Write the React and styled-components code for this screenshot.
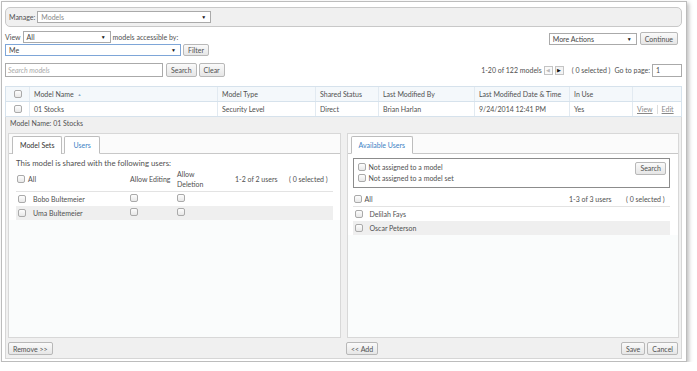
import React from 'react';
import styled, { createGlobalStyle } from 'styled-components';

const Global = createGlobalStyle`
  html, body { margin: 0; padding: 0; background: #fff; }
  body { font-family: Lato, "Open Sans", sans-serif; font-size: 7px; color: #505050; }
  * { box-sizing: border-box; }
`;

const Frame = styled.div`
  margin: 1px 0 0 1px;
  width: 686px;
  height: 361px;
  border: 1px solid #bcbcbc;
  box-shadow: 2px 2px 4px rgba(0,0,0,0.25);
  padding: 5px 4px 0 3px;
  display: flex;
  flex-direction: column;
`;

const ManageBar = styled.div`
  height: 20px;
  border: 1px solid #c8c8c8;
  border-radius: 5px;
  background: #f0f0f0;
  display: flex;
  align-items: center;
  padding-left: 3px;
  gap: 2px;
`;

const Label = styled.span`
  color: ${p => p.$muted ? '#777' : '#505050'};
  white-space: nowrap;
`;

const SelectBox = styled.div`
  width: ${p => p.$w}px;
  height: ${p => p.$h || 12}px;
  border: 1px solid ${p => p.$focus ? '#7ea6d8' : '#aaa'};
  background: #fff;
  display: flex;
  align-items: center;
  justify-content: space-between;
  padding: 0 4px 0 3px;
  color: ${p => p.$muted ? '#888' : '#444'};
  flex: none;
  &::after {
    content: '▼';
    font-size: 5px;
    color: #111;
  }
`;

const Button = styled.div`
  height: ${p => p.$h || 13}px;
  padding: 0 ${p => p.$px ?? 4}px;
  border: 1px solid #b8b8b8;
  border-radius: 2px;
  background: linear-gradient(#fafafa, #e6e6e6);
  display: inline-flex;
  align-items: center;
  color: #505050;
  white-space: nowrap;
  flex: none;
`;

const Controls = styled.div`
  margin-top: 4px;
  display: flex;
  justify-content: space-between;
  align-items: flex-start;
`;

const ControlCol = styled.div`
  display: flex;
  flex-direction: column;
  gap: 1px;
`;

const Row = styled.div`
  display: flex;
  align-items: center;
  gap: ${p => p.$gap ?? 2}px;
`;

const RightActions = styled(Row)`
  margin-right: 4px;
  margin-top: 1px;
`;

const SearchRow = styled.div`
  margin-top: 7px;
  display: flex;
  justify-content: space-between;
  align-items: center;
  height: 14px;
`;

const SearchInput = styled.div`
  width: 158px;
  height: 14px;
  border: 1px solid #aaa;
  background: #fff;
  padding-left: 2px;
  display: flex;
  align-items: center;
  color: #aaa;
  font-style: italic;
  margin-right: 1px;
`;

const PagerBtn = styled.div`
  width: 9px;
  height: 9px;
  border: 1px solid #c4c4c4;
  background: ${p => p.$on ? '#f4f4f4' : '#fafafa'};
  display: flex;
  align-items: center;
  justify-content: center;
  font-size: 5px;
  color: ${p => p.$on ? '#111' : '#bbb'};
`;

const PageInput = styled.div`
  width: 30px;
  height: 13px;
  border: 1px solid #aaa;
  background: #fff;
  padding-left: 3px;
  display: flex;
  align-items: center;
`;

const Table = styled.div`
  margin-top: 9px;
  border: 1px solid #d6e2ec;
  border-bottom: none;
`;

const TRow = styled.div`
  display: grid;
  grid-template-columns: 23px 188px 98px 63px 96px 95px 63px 1fr;
  height: 15px;
  background: ${p => p.$head ? '#f4f8fb' : '#fff'};
  border-bottom: 1px solid #d6e2ec;
`;

const Cell = styled.div`
  display: flex;
  align-items: center;
  padding-left: ${p => p.$center ? 0 : 4}px;
  justify-content: ${p => p.$center ? 'center' : 'flex-start'};
  border-left: ${p => p.$first ? 'none' : '1px solid #e2eaf1'};
  gap: 4px;
  white-space: nowrap;
`;

const SortArrow = styled.span`
  font-size: 4px;
  color: #8aa8c4;
`;

const Link = styled.span`
  text-decoration: underline;
  color: #888;
`;

const Sep = styled.span`
  width: 1px;
  height: 9px;
  background: #ddd;
`;

const Check = styled.span`
  width: 8px;
  height: 8px;
  border: 1px solid #aaa;
  border-radius: 2px;
  background: linear-gradient(#fdfdfd, #e8e8e8);
  flex: none;
  display: inline-block;
`;

const Detail = styled.div`
  height: 242px;
  background: #f0f0f0;
  border: 1px solid #d6d6d6;
  border-top: none;
  padding: 0 2px 3px 2px;
  display: flex;
  flex-direction: column;
`;

const DetailTitle = styled.div`
  height: 16px;
  padding: 0 0 4px 2px;
  display: flex;
  align-items: center;
`;

const Panels = styled.div`
  display: flex;
  gap: 6px;
  height: 206px;
`;

const Panel = styled.div`
  flex: 1;
  background: #fafcfc;
  border: 1px solid #d8d8d8;
  display: flex;
  flex-direction: column;
`;

const TabStrip = styled.div`
  height: 20px;
  padding: 2px 0 0 3px;
  display: flex;
  align-items: flex-end;
  gap: 2px;
  border-bottom: 1px solid #c8c8c8;
  background: #fbfbfb;
`;

const Tab = styled.div`
  height: 18px;
  padding: 0 ${p => p.$px || 8}px;
  border: 1px solid #bdbdbd;
  border-bottom: ${p => p.$active ? '1px solid #fff' : 'none'};
  margin-bottom: -1px;
  border-radius: 2px 2px 0 0;
  background: #fff;
  color: ${p => p.$active ? '#3d7fc4' : '#333'};
  display: flex;
  align-items: center;
`;

const PanelBody = styled.div`
  padding: ${p => p.$pad};
  display: flex;
  flex-direction: column;
  background: #fff;
`;

const Note = styled.div`
  height: 12px;
  display: flex;
  align-items: center;
  font-size: 7.8px;
`;

const ListHead = styled.div`
  display: grid;
  grid-template-columns: ${p => p.$cols};
  height: ${p => p.$h}px;
  padding-bottom: ${p => p.$pb || 0}px;
  align-items: center;
  border-bottom: 1px solid #e3e3e3;
`;

const ListRow = styled.div`
  display: grid;
  grid-template-columns: ${p => p.$cols};
  height: 14px;
  align-items: center;
  background: ${p => p.$alt ? '#efefef' : '#fff'};
`;

const CheckLabel = styled.span`
  display: flex;
  align-items: center;
  gap: ${p => p.$gap ?? 3}px;
  padding-left: ${p => p.$pl ?? 2}px;
`;

const Stacked = styled.span`
  line-height: 10px;
`;

const FilterBox = styled.div`
  height: 30px;
  margin: 4px 0 5px;
  border: 1px solid #8c8c8c;
  display: flex;
  justify-content: space-between;
  padding: 3px 3px 0 3px;
`;

const FilterChecks = styled.div`
  display: flex;
  flex-direction: column;
  justify-content: center;
  gap: 3px;
  padding-bottom: 3px;
`;

const Fill = styled.div`
  flex: 1;
  background: #fafcfc;
`;

const Footer = styled.div`
  margin-top: 4px;
  display: flex;
  gap: 6px;
`;

const FooterHalf = styled.div`
  flex: 1;
  display: flex;
  justify-content: space-between;
  gap: 2px;
  padding-right: ${p => p.$pr || 0}px;
`;

const users = ['Bobo Bultemeier', 'Uma Bultemeier'];
const available = ['Delilah Fays', 'Oscar Peterson'];
const leftCols = '114px 47px 58px 54px 1fr';
const rightCols = '1fr 57px 44px';

export default function App() {
  return (
    <>
      <Global />
      <Frame>
        <ManageBar>
          <Label>Manage:</Label>
          <SelectBox $w={174} $muted>Models</SelectBox>
        </ManageBar>

        <Controls>
          <ControlCol>
            <Row>
              <Label>View</Label>
              <SelectBox $w={88}>All</SelectBox>
              <Label>models accessible by:</Label>
            </Row>
            <Row>
              <SelectBox $w={176} $h={12} $focus>Me</SelectBox>
              <Button $h={12}>Filter</Button>
            </Row>
          </ControlCol>
          <RightActions $gap={3}>
            <SelectBox $w={88}>More Actions</SelectBox>
            <Button>Continue</Button>
          </RightActions>
        </Controls>

        <SearchRow>
          <Row $gap={2}>
            <SearchInput>Search models</SearchInput>
            <Button $h={14}>Search</Button>
            <Button $h={14}>Clear</Button>
          </Row>
          <Row $gap={2}>
            <Label>1-20 of 122 models</Label>
            <PagerBtn>◀</PagerBtn>
            <PagerBtn $on>▶</PagerBtn>
            <Label style={{ marginLeft: 6 }}>( 0 selected )</Label>
            <Label style={{ marginLeft: 2 }}>Go to page:</Label>
            <PageInput>1</PageInput>
          </Row>
        </SearchRow>

        <Table>
          <TRow $head>
            <Cell $first $center><Check /></Cell>
            <Cell>Model Name <SortArrow>▲</SortArrow></Cell>
            <Cell>Model Type</Cell>
            <Cell>Shared Status</Cell>
            <Cell>Last Modified By</Cell>
            <Cell>Last Modified Date &amp; Time</Cell>
            <Cell>In Use</Cell>
            <Cell />
          </TRow>
          <TRow>
            <Cell $first $center><Check /></Cell>
            <Cell>01 Stocks</Cell>
            <Cell>Security Level</Cell>
            <Cell>Direct</Cell>
            <Cell>Brian Harlan</Cell>
            <Cell>9/24/2014 12:41 PM</Cell>
            <Cell>Yes</Cell>
            <Cell><Link>View</Link><Sep /><Link>Edit</Link></Cell>
          </TRow>
        </Table>

        <Detail>
          <DetailTitle>Model Name: 01 Stocks</DetailTitle>
          <Panels>
            <Panel>
              <TabStrip>
                <Tab $px={7}>Model Sets</Tab>
                <Tab $active $px={8}>Users</Tab>
              </TabStrip>
              <PanelBody $pad="3px 7px 0 7px">
                <Note>This model is shared with the following users:</Note>
                <ListHead $cols={leftCols} $h={23} $pb={5}>
                  <CheckLabel $pl={1}><Check />All</CheckLabel>
                  <span>Allow Editing</span>
                  <Stacked>Allow<br />Deletion</Stacked>
                  <span>1-2 of 2 users</span>
                  <span>( 0 selected )</span>
                </ListHead>
                {users.map((u, i) => (
                  <ListRow key={u} $cols={leftCols} $alt={i % 2 === 1}>
                    <CheckLabel $gap={7}><Check />{u}</CheckLabel>
                    <span><Check /></span>
                    <span><Check /></span>
                    <span />
                    <span />
                  </ListRow>
                ))}
              </PanelBody>
              <Fill />
            </Panel>

            <Panel>
              <TabStrip>
                <Tab $active $px={7}>Available Users</Tab>
              </TabStrip>
              <PanelBody $pad="0 8px 0 5px">
                <FilterBox>
                  <FilterChecks>
                    <CheckLabel $pl={1}><Check />Not assigned to a model</CheckLabel>
                    <CheckLabel $pl={1}><Check />Not assigned to a model set</CheckLabel>
                  </FilterChecks>
                  <Button $h={13}>Search</Button>
                </FilterBox>
                <ListHead $cols={rightCols} $h={14}>
                  <CheckLabel $pl={1}><Check />All</CheckLabel>
                  <span>1-3 of 3 users</span>
                  <span>( 0 selected )</span>
                </ListHead>
                {available.map((u, i) => (
                  <ListRow key={u} $cols={rightCols} $alt={i % 2 === 1}>
                    <CheckLabel $gap={7}><Check />{u}</CheckLabel>
                    <span />
                    <span />
                  </ListRow>
                ))}
              </PanelBody>
              <Fill />
            </Panel>
          </Panels>
          <Footer>
            <FooterHalf>
              <Button>Remove &gt;&gt;</Button>
            </FooterHalf>
            <FooterHalf $pr={1}>
              <Button>&lt;&lt; Add</Button>
              <Row $gap={2}>
                <Button>Save</Button>
                <Button>Cancel</Button>
              </Row>
            </FooterHalf>
          </Footer>
        </Detail>
      </Frame>
    </>
  );
}
